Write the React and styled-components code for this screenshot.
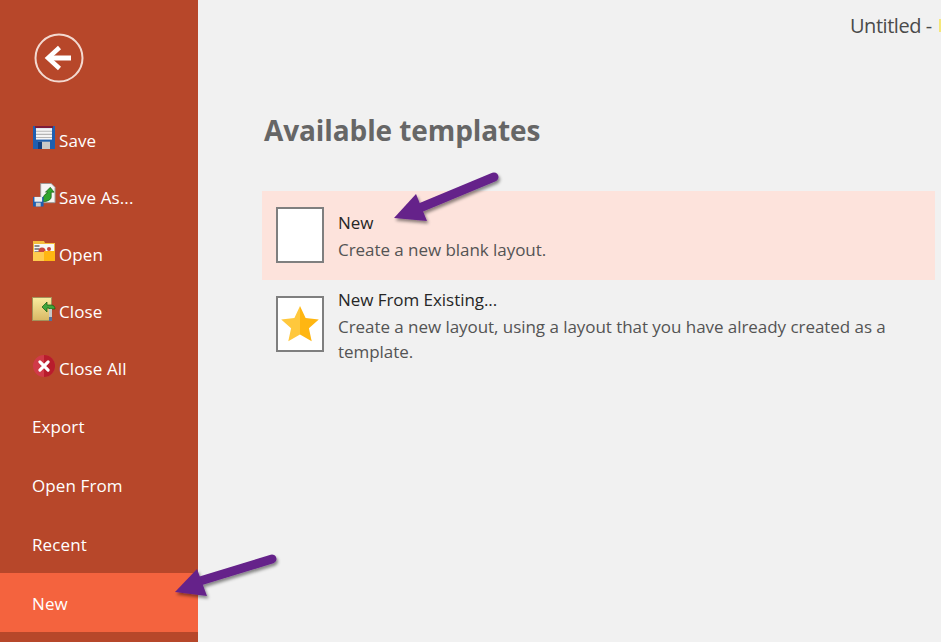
import React from "react";
import styled, { createGlobalStyle } from "styled-components";

const GlobalStyle = createGlobalStyle`
  html, body {
    margin: 0;
    padding: 0;
    height: 100%;
    overflow: hidden;
    background: #f1f1f1;
    font-family: "Open Sans", "Noto Sans", sans-serif;
  }
`;

const Page = styled.div`
  position: relative;
  display: flex;
  width: 941px;
  height: 642px;
  overflow: hidden;
`;

const Sidebar = styled.nav`
  display: flex;
  flex-direction: column;
  flex: none;
  width: 198px;
  height: 642px;
  background: #b7472a;
  color: #fff;
`;

const BackButton = styled.div`
  display: flex;
  align-items: center;
  height: 111px;
  padding: 4px 0 0 34px;
  box-sizing: border-box;
`;

const MenuItem = styled.div`
  display: flex;
  align-items: center;
  gap: 3px;
  height: ${(p) => (p.$icon ? "57px" : "59px")};
  padding: 2px 0 0 32px;
  box-sizing: border-box;
  font-size: 17px;
  letter-spacing: 0.1px;
  background: ${(p) => (p.$active ? "#f4633e" : "transparent")};
`;

const IconSlot = styled.span`
  display: flex;
  align-items: center;
  justify-content: center;
  flex: none;
  width: 24px;
  height: 24px;
  margin-top: -6px;
`;

const Main = styled.main`
  flex: 1;
  min-width: 0;
  display: flex;
  flex-direction: column;
`;

const TitleBar = styled.header`
  display: flex;
  align-items: center;
  height: 50px;
  padding-left: 652px;
  font-size: 20px;
  letter-spacing: -0.47px;
  color: #4a4a4a;
  white-space: nowrap;
`;

const Sliver = styled.span`
  flex: none;
  width: 2px;
  height: 13px;
  margin-left: auto;
  background: #f5e77a;
`;

const Content = styled.section`
  padding: 0 6px 0 64px;
`;

const Heading = styled.h1`
  margin: 0 0 42px 2px;
  padding-top: 61px;
  font-size: 28px;
  line-height: 38px;
  font-weight: 700;
  letter-spacing: -0.1px;
  color: #666;
`;

const TemplateRow = styled.div`
  display: flex;
  align-items: flex-start;
  gap: 14px;
  height: 89px;
  padding: 16px 14px 0;
  box-sizing: border-box;
  background: ${(p) => (p.$selected ? "#fde3dc" : "transparent")};
`;

const Thumb = styled.div`
  display: flex;
  align-items: center;
  justify-content: center;
  flex: none;
  width: 48px;
  height: 56px;
  box-sizing: border-box;
  border: 2px solid #7f7f7f;
  background: #fff;
`;

const RowText = styled.div`
  flex: 1;
  min-width: 0;
  margin-top: ${(p) => (p.$tight ? "-9px" : "3px")};
  font-size: 17px;
  letter-spacing: -0.05px;
`;

const RowTitle = styled.div`
  line-height: 26px;
  color: #262626;
`;

const RowDesc = styled.div`
  margin-top: 1px;
  line-height: 25px;
  color: #545454;
`;

const Pointer = styled.svg`
  position: absolute;
  left: ${(p) => p.$x}px;
  top: ${(p) => p.$y}px;
  overflow: visible;
`;

function SaveIcon() {
  return (
    <svg width="22" height="23" viewBox="0 0 22 22" preserveAspectRatio="none">
      <rect x="0" y="0" width="22" height="22" fill="#1f5fb0" />
      <rect x="2" y="0" width="18" height="2" fill="#7d1b3a" />
      <rect x="3" y="2" width="16" height="11" fill="#f4f4f4" />
      <path d="M3 5h16M3 8h16M3 11h16" stroke="#b5b5b5" strokeWidth="1" />
      <rect x="5" y="15" width="12" height="7" fill="#c9c9c9" />
      <rect x="5" y="15" width="4" height="7" fill="#123e80" />
    </svg>
  );
}

function SaveAsIcon() {
  return (
    <svg width="23" height="24" viewBox="0 0 24 24">
      <path d="M8 0h11l4 4v16H8z" fill="#f5f5f5" stroke="#999" strokeWidth="1" />
      <path d="M10 19c0-5 2-8 5-9v-1l-2 0 5-5 4 5h-3v5c0 3-4 5-9 5z" fill="#2ea52e" stroke="#14590f" strokeWidth="0.7" />
      <rect x="0" y="14" width="11" height="10" fill="#1f5fb0" />
      <rect x="1.5" y="14" width="8" height="5" fill="#f0f0f0" />
      <rect x="3" y="20" width="5" height="4" fill="#c9c9c9" />
    </svg>
  );
}

function OpenIcon() {
  return (
    <svg width="22" height="21" viewBox="0 0 22 21">
      <path d="M0 0h11l1 2h10v18H0z" fill="#f5bd3e" />
      <rect x="1" y="3" width="20" height="9" fill="#f7f7f7" />
      <path d="M1.5 5h5M1.5 8h5M1.5 11h5" stroke="#222" strokeWidth="1" />
      <circle cx="9" cy="10" r="3.5" fill="#c9463c" />
      <circle cx="16" cy="8" r="2" fill="#c9463c" />
      <path d="M0 11h11v9H0z" fill="#ffcb4f" />
      <path d="M11 10h11v10H11z" fill="#ffb612" />
    </svg>
  );
}

function CloseIcon() {
  return (
    <svg width="24" height="24" viewBox="0 0 24 24">
      <defs>
        <linearGradient id="doorFill" x1="0" y1="0" x2="0" y2="1">
          <stop offset="0" stopColor="#f8ec9f" />
          <stop offset="1" stopColor="#d9b864" />
        </linearGradient>
      </defs>
      <rect x="0.5" y="0.5" width="19" height="23" fill="url(#doorFill)" stroke="#a3925a" />
      <path d="M10 10l5-5v3h4c3 0 4 2 4 4h-6v-1h-2v4z" fill="#3fa63c" stroke="#14590f" strokeWidth="0.7" />
      <rect x="17" y="12" width="3" height="12" fill="#c8c8c8" />
      <rect x="17" y="20" width="3" height="4" fill="#55709a" />
    </svg>
  );
}

function CloseAllIcon() {
  return (
    <svg width="22" height="22" viewBox="0 0 24 24">
      <circle cx="12" cy="12" r="12" fill="#d03a48" />
      <path d="M12 0a12 12 0 0 1 0 24z" fill="#b81c2c" />
      <path d="M7.5 7.5l9 9M16.5 7.5l-9 9" stroke="#fff" strokeWidth="3.4" strokeLinecap="round" />
    </svg>
  );
}

function BackIcon() {
  return (
    <svg width="50" height="50" viewBox="0 0 50 50">
      <circle cx="25" cy="25" r="23.5" fill="none" stroke="#f3d9d0" strokeWidth="2" />
      <path d="M37 25H17" stroke="#fff" strokeWidth="5" />
      <path d="M25.5 14.5L14 25l11.5 10.5" fill="none" stroke="#fff" strokeWidth="4.5" />
    </svg>
  );
}

function StarIcon() {
  return (
    <svg width="38" height="36" viewBox="0 0 38 36">
      <path d="M19 0l5.6 12 13.2 1.4-9.9 8.8 2.8 13L19 28.6V0z" fill="#ffb612" />
      <path d="M19 0l-5.6 12L.2 13.4l9.9 8.8-2.8 13L19 28.6V0z" fill="#ffc83d" />
    </svg>
  );
}

function Arrow({ x, y, width, height, head, tail }) {
  return (
    <Pointer $x={x} $y={y} width={width} height={height} viewBox={`0 0 ${width} ${height}`}>
      <defs>
        <filter id={`shadow${x}`} x="-20%" y="-20%" width="140%" height="150%">
          <feDropShadow dx="1.5" dy="2.5" stdDeviation="1.6" floodColor="#000" floodOpacity="0.45" />
        </filter>
      </defs>
      <g filter={`url(#shadow${x})`}>
        <path d={tail} stroke="#65218a" strokeWidth="9" strokeLinecap="round" fill="none" />
        <path d={head} fill="#65218a" />
      </g>
    </Pointer>
  );
}

const topItems = [
  { label: "Save", icon: <SaveIcon /> },
  { label: "Save As...", icon: <SaveAsIcon /> },
  { label: "Open", icon: <OpenIcon /> },
  { label: "Close", icon: <CloseIcon /> },
  { label: "Close All", icon: <CloseAllIcon /> },
];

const bottomItems = ["Export", "Open From", "Recent"];

export default function App() {
  return (
    <>
      <GlobalStyle />
      <Page>
        <Sidebar>
          <BackButton>
            <BackIcon />
          </BackButton>
          {topItems.map((item) => (
            <MenuItem key={item.label} $icon>
              <IconSlot>{item.icon}</IconSlot>
              {item.label}
            </MenuItem>
          ))}
          {bottomItems.map((label) => (
            <MenuItem key={label}>{label}</MenuItem>
          ))}
          <MenuItem $active>New</MenuItem>
        </Sidebar>
        <Main>
          <TitleBar>
            Untitled -<Sliver />
          </TitleBar>
          <Content>
            <Heading>Available templates</Heading>
            <TemplateRow $selected>
              <Thumb />
              <RowText>
                <RowTitle>New</RowTitle>
                <RowDesc>Create a new blank layout.</RowDesc>
              </RowText>
            </TemplateRow>
            <TemplateRow>
              <Thumb>
                <StarIcon />
              </Thumb>
              <RowText $tight>
                <RowTitle>New From Existing...</RowTitle>
                <RowDesc>
                  Create a new layout, using a layout that you have already created as a template.
                </RowDesc>
              </RowText>
            </TemplateRow>
          </Content>
        </Main>
        <Arrow
          x={392}
          y={170}
          width={110}
          height={56}
          tail="M102 7L30 37"
          head="M2 48L24 24L35 51Z"
        />
        <Arrow
          x={172}
          y={552}
          width={106}
          height={50}
          tail="M100 7L28 29"
          head="M3 40L25 17L35 44Z"
        />
      </Page>
    </>
  );
}
